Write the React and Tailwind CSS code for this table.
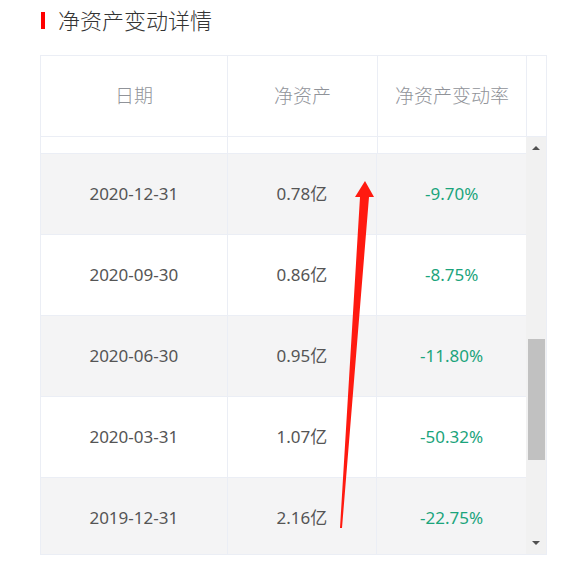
import { useState } from 'react';

const ROWS = [
    { date: '2020-12-31', value: '0.78亿', rate: '-9.70%' },
    { date: '2020-09-30', value: '0.86亿', rate: '-8.75%' },
    { date: '2020-06-30', value: '0.95亿', rate: '-11.80%' },
    { date: '2020-03-31', value: '1.07亿', rate: '-50.32%' },
    { date: '2019-12-31', value: '2.16亿', rate: '-22.75%' },
];

const FONT = { fontFamily: '"Noto Sans", "Noto Sans CJK SC", sans-serif' };

function ScrollBar() {
    return (
        <div className="flex w-[20px] shrink-0 flex-col items-center bg-[#f1f1f1]">
            <div className="mt-[9px] h-0 w-0 border-x-[4px] border-b-[4px] border-x-transparent border-b-[#505050]" />
            <div className="mt-[189px] h-[121px] w-[17px] bg-[#c1c1c1]" />
            <div className="mt-auto mb-[9px] h-0 w-0 border-x-[4px] border-t-[4px] border-x-transparent border-t-[#505050]" />
        </div>
    );
}

export default function App() {
    const [rows] = useState(ROWS);

    return (
        <div className="relative h-[568px] w-[572px] overflow-hidden bg-white" style={FONT}>
            <div className="flex items-center pl-[41px] pt-[8px]">
                <span className="h-[17px] w-[4px] bg-[#ff0000]" />
                <h2 className="ml-[13px] text-[22px] leading-[24px] font-light text-[#333]">净资产变动详情</h2>
            </div>

            <div className="ml-[40px] mt-[23px] w-[507px] border border-[#ebeef5]">
                <div className="flex h-[81px] border-b border-[#ebeef5] text-[19px] leading-[24px] font-light text-[#909399]">
                    <div className="flex w-[187px] items-center justify-center border-r border-[#ebeef5]">日期</div>
                    <div className="flex w-[150px] items-center justify-center border-r border-[#ebeef5]">净资产</div>
                    <div className="flex w-[149px] items-center justify-center border-r border-[#ebeef5]">净资产变动率</div>
                    <div className="w-[19px]" />
                </div>

                <div className="flex h-[417px]">
                    <div className="flex-1 overflow-hidden">
                        {/* tail of the row scrolled above */}
                        <div className="flex h-[17px] border-b border-[#ebeef5] bg-white">
                            <div className="w-[187px] border-r border-[#ebeef5]" />
                            <div className="w-[150px] border-r border-[#ebeef5]" />
                        </div>
                        {rows.map((r, i) => (
                            <div key={r.date} className={`flex h-[81px] border-b border-[#ebeef5] text-[17px] ${i % 2 === 0 ? 'bg-[#f4f4f5]' : 'bg-white'}`}>
                                <div className="flex w-[187px] items-center justify-center border-r border-[#ebeef5] text-[#555]">{r.date}</div>
                                <div className="flex w-[150px] items-center justify-center border-r border-[#ebeef5] text-[#555]">{r.value}</div>
                                <div className="flex w-[149px] items-center justify-center text-[#1ba47c]">{r.rate}</div>
                            </div>
                        ))}
                    </div>
                    <ScrollBar />
                </div>
            </div>

            <svg className="pointer-events-none absolute left-0 top-0" width="572" height="568">
                <polygon points="365,181 374,197 369,197 342,528 340,528 360,197 355,197" fill="#ff1a10" />
            </svg>
        </div>
    );
}
